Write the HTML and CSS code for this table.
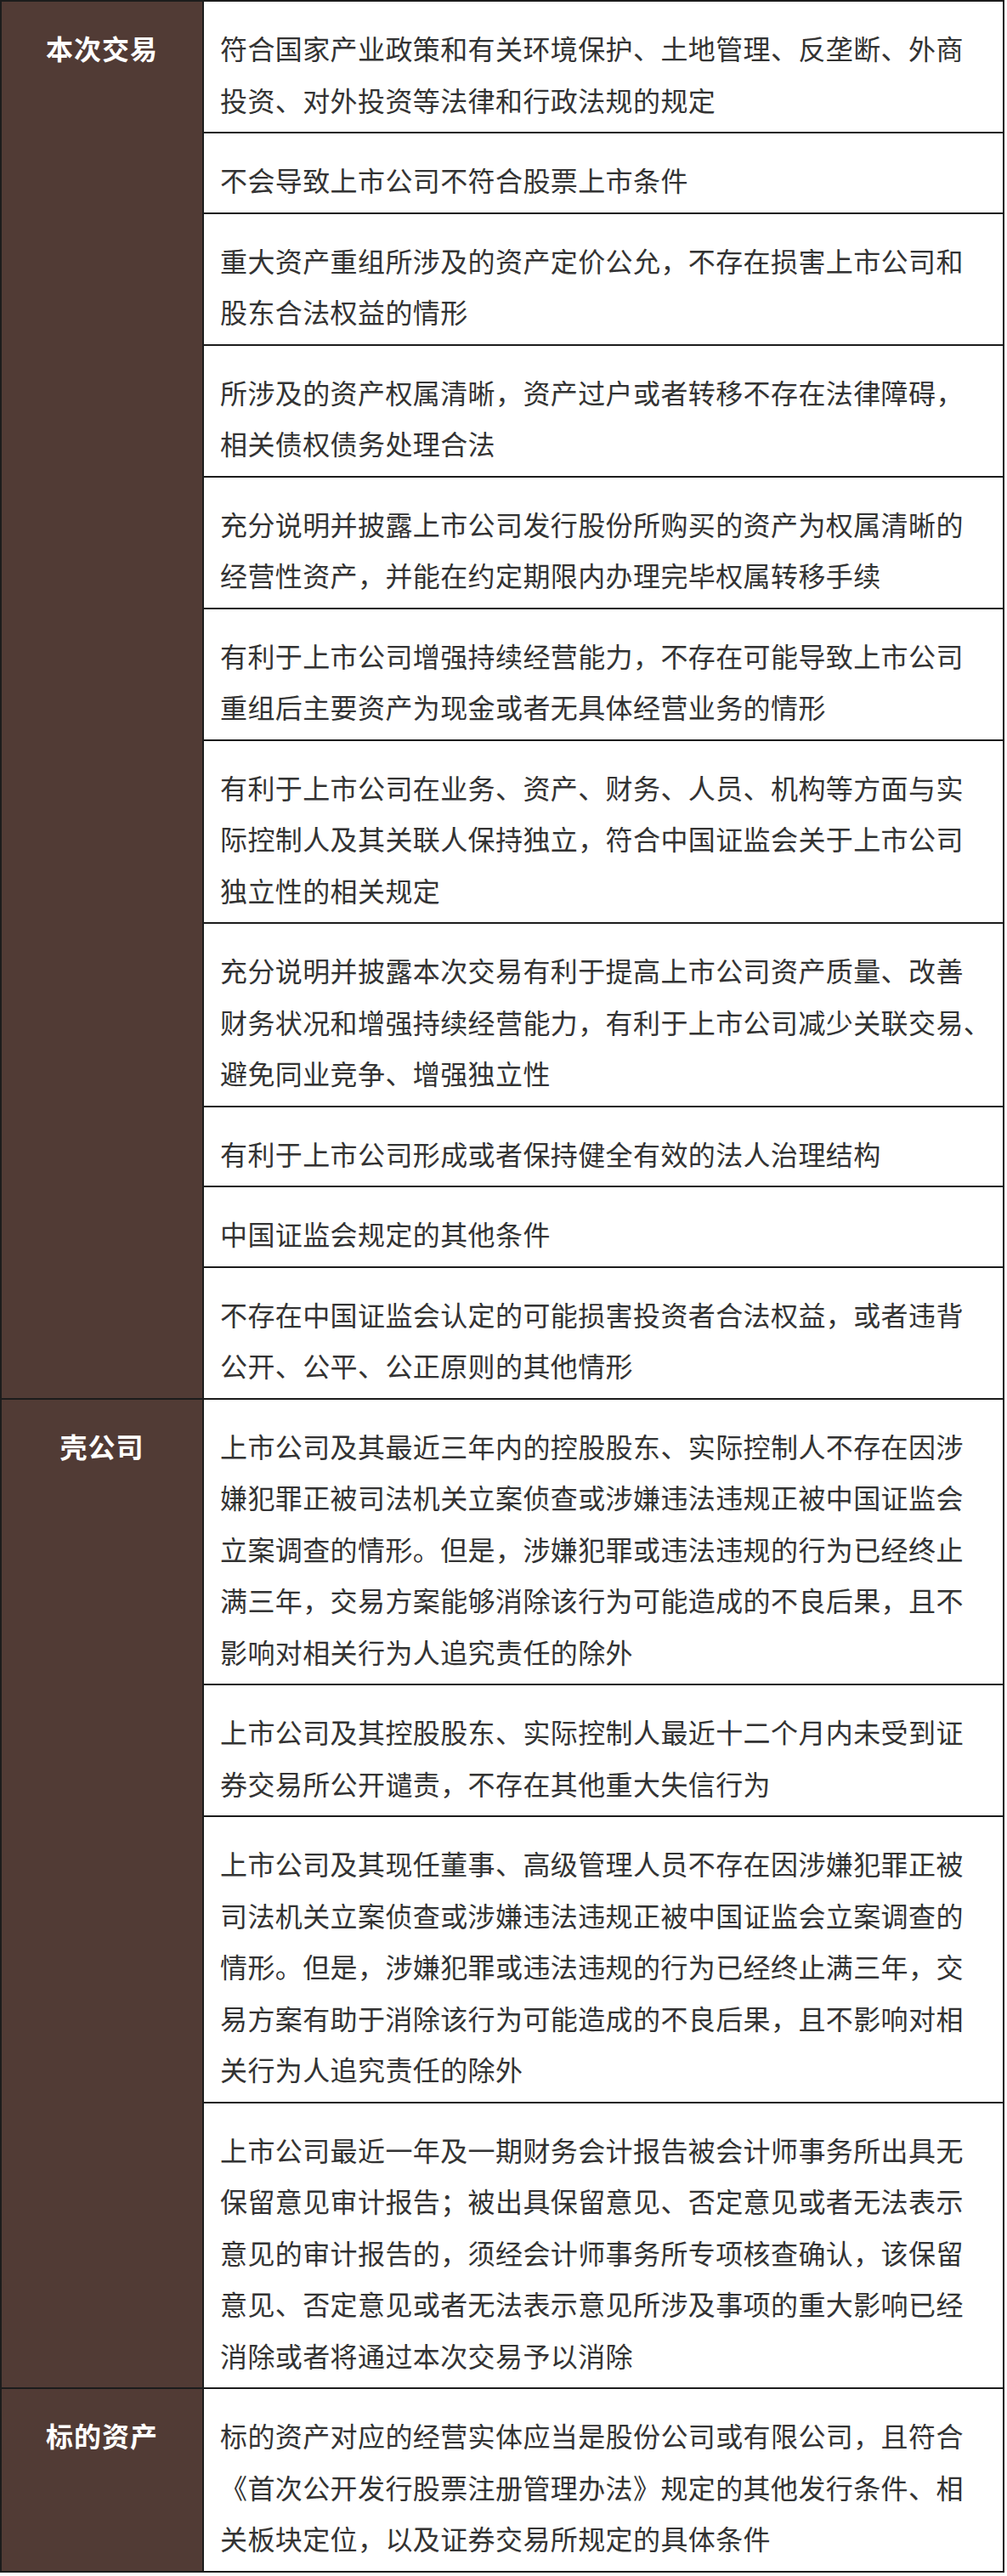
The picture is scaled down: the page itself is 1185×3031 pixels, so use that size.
FILE: index.html
```html
<!DOCTYPE html>
<html lang="zh-CN">
<head>
<meta charset="utf-8">
<title>重组条件</title>
<link rel="stylesheet" href="styles.css">
</head>
<body>
<table class="rules">
  <colgroup><col class="col-head"><col class="col-body"></colgroup>
  <tbody>
    <tr><th rowspan="11">本次交易</th><td>符合国家产业政策和有关环境保护、土地管理、反垄断、外商<br>投资、对外投资等法律和行政法规的规定</td></tr>
    <tr><td>不会导致上市公司不符合股票上市条件</td></tr>
    <tr><td>重大资产重组所涉及的资产定价公允，不存在损害上市公司和<br>股东合法权益的情形</td></tr>
    <tr><td>所涉及的资产权属清晰，资产过户或者转移不存在法律障碍，<br>相关债权债务处理合法</td></tr>
    <tr><td>充分说明并披露上市公司发行股份所购买的资产为权属清晰的<br>经营性资产，并能在约定期限内办理完毕权属转移手续</td></tr>
    <tr><td>有利于上市公司增强持续经营能力，不存在可能导致上市公司<br>重组后主要资产为现金或者无具体经营业务的情形</td></tr>
    <tr><td>有利于上市公司在业务、资产、财务、人员、机构等方面与实<br>际控制人及其关联人保持独立，符合中国证监会关于上市公司<br>独立性的相关规定</td></tr>
    <tr><td>充分说明并披露本次交易有利于提高上市公司资产质量、改善<br>财务状况和增强持续经营能力，有利于上市公司减少关联交易、<br>避免同业竞争、增强独立性</td></tr>
    <tr><td>有利于上市公司形成或者保持健全有效的法人治理结构</td></tr>
    <tr><td>中国证监会规定的其他条件</td></tr>
    <tr><td>不存在中国证监会认定的可能损害投资者合法权益，或者违背<br>公开、公平、公正原则的其他情形</td></tr>
    <tr><th rowspan="4">壳公司</th><td>上市公司及其最近三年内的控股股东、实际控制人不存在因涉<br>嫌犯罪正被司法机关立案侦查或涉嫌违法违规正被中国证监会<br>立案调查的情形。但是，涉嫌犯罪或违法违规的行为已经终止<br>满三年，交易方案能够消除该行为可能造成的不良后果，且不<br>影响对相关行为人追究责任的除外</td></tr>
    <tr><td>上市公司及其控股股东、实际控制人最近十二个月内未受到证<br>券交易所公开谴责，不存在其他重大失信行为</td></tr>
    <tr><td>上市公司及其现任董事、高级管理人员不存在因涉嫌犯罪正被<br>司法机关立案侦查或涉嫌违法违规正被中国证监会立案调查的<br>情形。但是，涉嫌犯罪或违法违规的行为已经终止满三年，交<br>易方案有助于消除该行为可能造成的不良后果，且不影响对相<br>关行为人追究责任的除外</td></tr>
    <tr><td>上市公司最近一年及一期财务会计报告被会计师事务所出具无<br>保留意见审计报告；被出具保留意见、否定意见或者无法表示<br>意见的审计报告的，须经会计师事务所专项核查确认，该保留<br>意见、否定意见或者无法表示意见所涉及事项的重大影响已经<br>消除或者将通过本次交易予以消除</td></tr>
    <tr><th>标的资产</th><td>标的资产对应的经营实体应当是股份公司或有限公司，且符合<br>《首次公开发行股票注册管理办法》规定的其他发行条件、相<br>关板块定位，以及证券交易所规定的具体条件</td></tr>
  </tbody>
</table>
</body>
</html>
```

FILE: styles.css
```css
html, body {
  margin: 0;
  padding: 0;
  background: #ffffff;
}

.rules {
  border-collapse: collapse;
  table-layout: fixed;
  width: 1182px;
  font-family: "Noto Sans CJK SC", "Microsoft YaHei", sans-serif;
  font-size: 32px;
  line-height: 60.5px;
}

.col-head {
  width: 238px;
}

.rules th,
.rules td {
  border: 2px solid #1c1c1c;
  padding: 24px 0 8px;
  vertical-align: top;
}

.rules th {
  background: #513b35;
  color: #ffffff;
  font-weight: 700;
  text-align: center;
  letter-spacing: 1px;
}

.rules td {
  padding-left: 19px;
  padding-right: 10px;
  color: #333333;
  font-weight: 400;
  text-align: left;
  letter-spacing: 0.4px;
  white-space: nowrap;
}
```
